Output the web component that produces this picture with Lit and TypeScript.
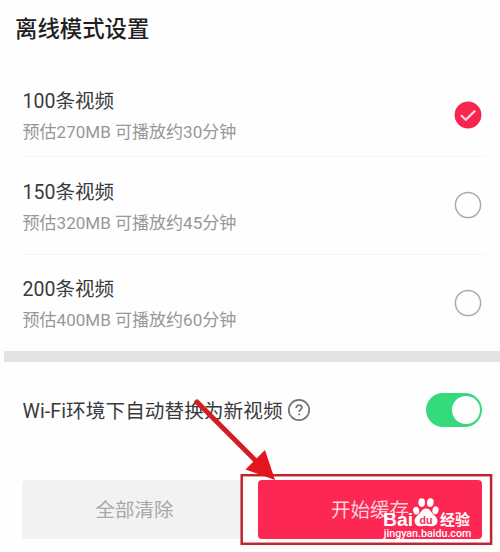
import { LitElement, html, svg, css } from "lit";
import { customElement, property } from "lit/decorators.js";

interface CacheOption {
  title: string;
  detail: string;
}

const OPTIONS: CacheOption[] = [
  { title: "100条视频", detail: "预估270MB 可播放约30分钟" },
  { title: "150条视频", detail: "预估320MB 可播放约45分钟" },
  { title: "200条视频", detail: "预估400MB 可播放约60分钟" },
];

@customElement("cache-option")
class CacheOptionRow extends LitElement {
  @property() title = "";
  @property() detail = "";
  @property({ type: Boolean }) checked = false;

  static styles = css`
    :host {
      display: flex;
      align-items: center;
      justify-content: space-between;
      box-sizing: border-box;
      padding-right: 3px;
    }
    .text {
      padding-top: 5px;
    }
    .title {
      font-size: 19.5px;
      line-height: 30px;
      color: #3a3a3c;
      white-space: nowrap;
    }
    .detail {
      font-size: 17.05px;
      line-height: 30px;
      color: #979799;
      white-space: nowrap;
    }
    .radio {
      display: block;
      width: 28px;
      height: 28px;
    }
  `;

  render() {
    return html`
      <div class="text">
        <div class="title">${this.title}</div>
        <div class="detail">${this.detail}</div>
      </div>
      <svg class="radio" viewBox="0 0 28 28" fill="none">
        ${this.checked
          ? svg`<circle cx="14" cy="14" r="13.4" fill="#f7254f" />
              <path d="M7 14.2l4.8 4.6 9.4-9.2" stroke="#ffd5dc" stroke-width="2.2" />`
          : svg`<circle cx="14" cy="14" r="12.6" stroke="#aaaaac" stroke-width="1.5" />`}
      </svg>
    `;
  }
}

@customElement("app-root")
class AppRoot extends LitElement {
  static styles = css`
    :host {
      display: block;
      position: relative;
      width: 500px;
      height: 552px;
      overflow: hidden;
      background: #fefefe;
      font-family: Roboto, "Noto Sans CJK SC", sans-serif;
    }
    .heading {
      box-sizing: border-box;
      margin: 0;
      padding: 13px 0 0 15px;
      height: 73px;
      font-size: 22.4px;
      line-height: 32px;
      font-weight: 500;
      color: #202022;
    }
    .options {
      height: 277.5px;
      padding: 0 15px 0 22.5px;
      display: grid;
      grid-template-rows: 83px 97.5px 97px;
    }
    cache-option + cache-option {
      border-top: 1.5px solid #f5f5f5;
    }
    .band {
      height: 11px;
      margin-left: 4px;
      background: #e3e3e3;
    }
    .wifi {
      height: 96px;
      display: flex;
      align-items: center;
      padding: 0 18px 0 22.5px;
    }
    .wifi-label {
      font-size: 19.6px;
      letter-spacing: 0.09px;
      color: #3a3a3c;
      white-space: nowrap;
    }
    .help {
      width: 24px;
      height: 24px;
      margin-left: 4px;
    }
    .toggle {
      margin-left: auto;
      width: 56px;
      height: 34px;
      box-sizing: border-box;
      padding: 3px 2px;
      display: flex;
      justify-content: flex-end;
      border-radius: 17px;
      background: #35da7d;
    }
    .knob {
      width: 28px;
      height: 28px;
      border-radius: 50%;
      background: #fefefe;
    }
    .actions {
      display: flex;
      padding: 22px 18px 0 22px;
      gap: 16px;
    }
    .button {
      box-sizing: border-box;
      height: 59px;
      line-height: 61px;
      font-size: 19.5px;
      text-align: center;
      border-radius: 4px;
    }
    .clear {
      width: 220px;
      padding-left: 5px;
      background: #f2f2f2;
      color: #a8a8aa;
    }
    .start {
      width: 224px;
      background: #fc2853;
      color: #ffd2da;
    }
    .overlay {
      position: absolute;
      left: 0;
      top: 0;
      width: 500px;
      height: 552px;
    }
    .brand {
      font-family: "Liberation Sans", sans-serif;
      font-size: 19px;
      font-weight: 700;
    }
    .brand-small {
      font-family: "Liberation Sans", sans-serif;
      font-size: 11.5px;
      font-weight: 700;
    }
    .brand-cjk {
      font-family: "Noto Sans CJK SC", sans-serif;
      font-size: 15px;
      font-weight: 700;
    }
    .brand-url {
      font-family: Roboto, "Liberation Sans", sans-serif;
      font-size: 10.8px;
      font-weight: 500;
    }
  `;

  render() {
    return html`
      <h1 class="heading">离线模式设置</h1>
      <div class="options">
        ${OPTIONS.map(
          (o, i) => html`<cache-option
            .title=${o.title}
            .detail=${o.detail}
            .checked=${i === 0}
          ></cache-option>`
        )}
      </div>
      <div class="band"></div>
      <div class="wifi">
        <span class="wifi-label">Wi-Fi环境下自动替换为新视频</span>
        <svg class="help" viewBox="0 0 24 24" fill="none" stroke="#737375" stroke-width="1.7">
          <circle cx="12" cy="12" r="10.2" />
          <path d="M9.2 10c0-1.8 1.2-2.9 2.9-2.9s2.8 1 2.8 2.5c0 1.9-2.7 2.1-2.7 4.3M12.1 15.4v1.9" />
        </svg>
        <div class="toggle"><div class="knob"></div></div>
      </div>
      <div class="actions">
        <div class="button clear">全部清除</div>
        <div class="button start">开始缓存</div>
      </div>
      <svg class="overlay" viewBox="0 0 500 552">
        <rect x="241.7" y="475.2" width="249.4" height="68.6" fill="none" stroke="#bd2630" stroke-width="2.5" />
        <path d="M197 402L255 460" stroke="#d31d25" stroke-width="5" stroke-linecap="round" />
        <path d="M275 480L245.5 469.5L265 450Z" fill="#e5151d" />
        <g fill="#fff">
          <text class="brand" x="383" y="525.5" textLength="30" lengthAdjust="spacingAndGlyphs">Bai</text>
          <ellipse cx="416.2" cy="510.7" rx="3" ry="3.9" transform="rotate(-15 416.2 510.7)" />
          <ellipse cx="421.7" cy="502.6" rx="3.3" ry="4.3" />
          <ellipse cx="430.3" cy="502.6" rx="3.3" ry="4.3" transform="rotate(8 430.3 502.6)" />
          <ellipse cx="435.5" cy="510.3" rx="3" ry="4" transform="rotate(15 435.5 510.3)" />
          <path d="M426 508.5c3.4 0 4.8 3 7 5.4 2.4 2.3 4.8 4.6 4.4 7.8-.4 3-3 4.8-6.2 4.6-2-.2-3.4-.6-5.2-.6s-3.4.4-5.4.6c-3.2.3-5.7-1.7-6-4.9-.3-3.2 2-5 4.4-7.4 2.2-2.2 3.6-5.5 7-5.5z" />
          <text class="brand-small" x="419.6" y="523.5" textLength="13" lengthAdjust="spacingAndGlyphs" fill="#f0305a">du</text>
          <text class="brand-cjk" x="440" y="524.5">经验</text>
          <text class="brand-url" x="383.8" y="536.6" textLength="87.5" lengthAdjust="spacingAndGlyphs">jingyan.baidu.com</text>
        </g>
      </svg>
    `;
  }
}
